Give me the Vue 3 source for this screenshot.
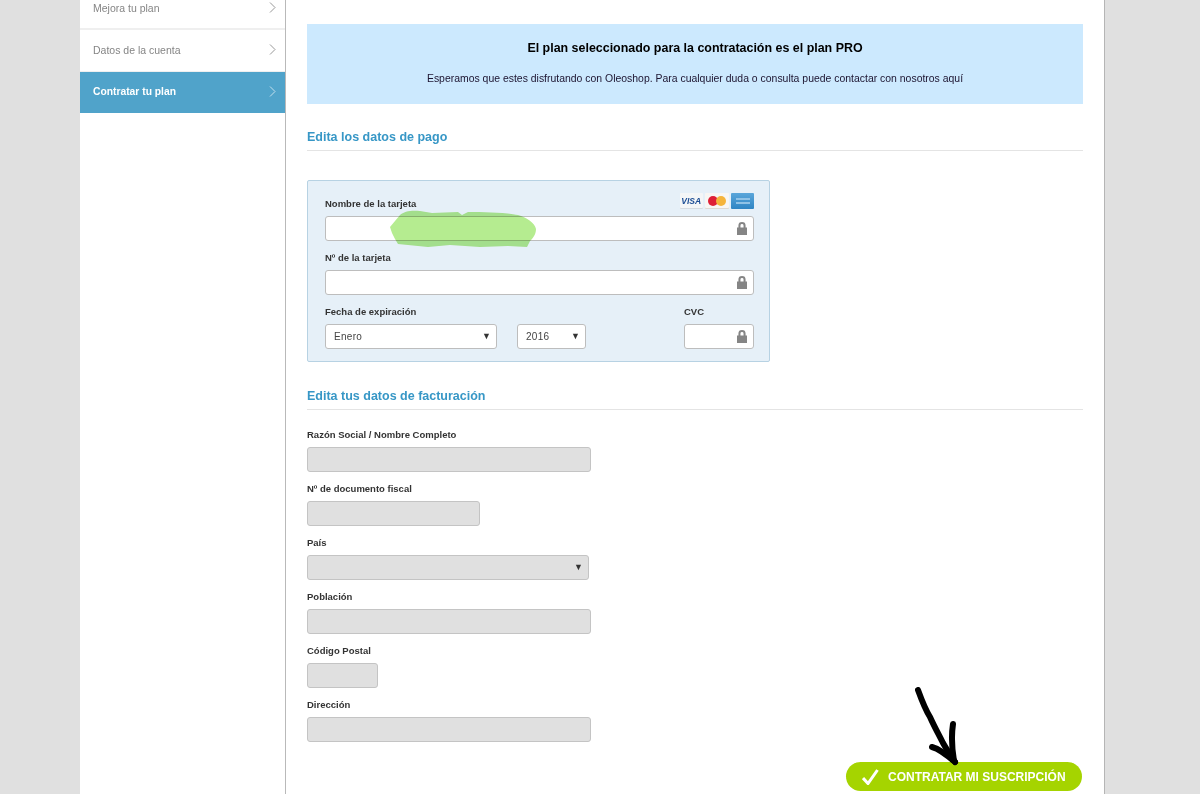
<script setup>
const menu = [
  { text: 'Mejora tu plan', cls: 'cut' },
  { text: 'Datos de la cuenta', cls: '' },
  { text: 'Contratar tu plan', cls: 'active' },
]
const billing = [
  { label: 'Razón Social / Nombre Completo', cls: 'w-full' },
  { label: 'Nº de documento fiscal', cls: 'w-doc' },
  { label: 'País', cls: 'w-country', select: true },
  { label: 'Población', cls: 'w-full' },
  { label: 'Código Postal', cls: 'w-zip' },
  { label: 'Dirección', cls: 'w-full' },
]
const lock = 'M3 6V4.200a3 3 0 0 1 6 0V6h1.200v6.600H1.800V6zm1.700 0h2.600V4.200a1.300 1.300 0 0 0-2.600 0z'
</script>

<template>
  <div class="shell">
    <aside class="side">
      <a v-for="m in menu" :key="m.text" class="side-item" :class="m.cls">
        <span>{{ m.text }}</span>
        <svg class="chev" width="7" height="11" viewBox="0 0 7 11"><path d="M1 .5l5 5-5 5" fill="none" stroke="currentColor" stroke-width=".9" /></svg>
      </a>
    </aside>

    <main class="main">
      <section class="banner">
        <h1>El plan seleccionado para la contratación es el plan PRO</h1>
        <p>Esperamos que estes disfrutando con Oleoshop. Para cualquier duda o consulta puede contactar con nosotros aquí</p>
      </section>

      <h2 class="title">Edita los datos de pago</h2>

      <section class="card">
        <div class="label-row">
          <label class="lbl">Nombre de la tarjeta</label>
          <div class="logos">
            <span class="logo visa">VISA</span>
            <span class="logo mc"><i class="red"></i><i class="amber"></i></span>
            <span class="logo amex"><i></i><i></i></span>
          </div>
        </div>
        <div class="input"><svg class="lock" width="10" height="13" viewBox="1.800 1.200 8.400 11.400" preserveAspectRatio="none"><path :d="lock" fill="#858585" fill-rule="evenodd" /></svg></div>

        <label class="lbl gap">Nº de la tarjeta</label>
        <div class="input"><svg class="lock" width="10" height="13" viewBox="1.800 1.200 8.400 11.400" preserveAspectRatio="none"><path :d="lock" fill="#858585" fill-rule="evenodd" /></svg></div>

        <div class="date-row gap">
          <div class="month">
            <label class="lbl">Fecha de expiración</label>
            <div class="input sel">Enero<span class="caret">▼</span></div>
          </div>
          <div class="year">
            <div class="lbl">&nbsp;</div>
            <div class="input sel">2016<span class="caret">▼</span></div>
          </div>
          <div class="cvc">
            <label class="lbl">CVC</label>
            <div class="input"><svg class="lock" width="10" height="13" viewBox="1.800 1.200 8.400 11.400" preserveAspectRatio="none"><path :d="lock" fill="#858585" fill-rule="evenodd" /></svg></div>
          </div>
        </div>
      </section>

      <h2 class="title second">Edita tus datos de facturación</h2>

      <section class="billing">
        <div v-for="f in billing" :key="f.label" class="bfield">
          <label class="lbl">{{ f.label }}</label>
          <div class="input off" :class="f.cls"><span v-if="f.select" class="caret">▼</span></div>
        </div>
      </section>

      <div class="actions">
        <button class="cta" type="button">
          <svg width="17" height="17" viewBox="0 0 17 17"><path d="M1 10l5 5.500L15.500 2" fill="none" stroke="#fff" stroke-width="3" /></svg>
          CONTRATAR MI SUSCRIPCIÓN
        </button>
      </div>
    </main>

    <svg class="blob" width="150" height="40" viewBox="0 0 150 40">
      <path d="M10 6C14 2 22 1 30 2l12 2 26-1 4 3 6-3c17 0 42 1 50 3s17 8 18 14c0 6-4 10-6 12l-3 6-19-1-28 1-30-2-22 2-30-3-3-5-3-6-2-6z" fill="#b5ec90" />
    </svg>
    <svg class="arrow" width="60" height="90" viewBox="0 0 60 90">
      <path d="M3 3C7 14 10 22 15 30c4 9 9 18 13 26 4 7 8 13 12 19" fill="none" stroke="#000" stroke-width="6" stroke-linecap="round" />
      <path d="M38 37c-2 13-1 25 1 37M17 60c8 2 15 8 23 15" fill="none" stroke="#000" stroke-width="6" stroke-linecap="round" />
    </svg>
  </div>
</template>

<style>
html, body { margin: 0; height: 100%; overflow: hidden; background: #e0e0e0; }
</style>

<style scoped>
.shell {
  position: relative;
  display: flex;
  width: 1025px;
  height: 794px;
  margin-left: 80px;
  background: #fff;
  border-right: 1px solid #b5b5b5;
  box-sizing: border-box;
  font-family: "Liberation Sans", Arial, sans-serif;
}
.side { width: 206px; flex: none; border-right: 1px solid #b9b9b9; box-sizing: border-box; }
.side-item {
  display: flex;
  align-items: center;
  justify-content: space-between;
  height: 42px;
  padding: 0 9px 2px 13px;
  box-sizing: border-box;
  border-bottom: 1px solid #efefef;
  font-size: 10.500px;
  color: #858585;
}
.side-item.cut { height: 30px; padding-bottom: 13px; border-bottom-width: 2px; }
.side-item.active { height: 41px; background: #50a3ca; color: #fff; font-weight: 700; font-size: 10.300px; border-bottom: 0; }
.chev { color: #8c8c8c; }
.active .chev { color: #cfe6f1; }

.main { flex: 1; padding: 24px 21px 0; min-width: 0; }
.banner { height: 80px; background: #cce9fe; text-align: center; box-sizing: border-box; padding-top: 17px; color: #000; }
.banner h1 { margin: 0; font-size: 12.450px; line-height: 14px; font-weight: 700; }
.banner p { margin: 17px 0 0; font-size: 10.450px; line-height: 13px; color: #1c1430; }

.title {
  margin: 24px 0 0;
  height: 22px;
  font-size: 12.500px;
  line-height: 18px;
  font-weight: 700;
  color: #3797c6;
  border-bottom: 1px solid #e4e4e4;
}
.title.second { margin-top: 25px; }

.card {
  width: 463px;
  height: 182px;
  margin-top: 29px;
  padding: 14px 15px 0 17px;
  box-sizing: border-box;
  background: #e6f0f8;
  border: 1px solid #b7d2e3;
  border-radius: 2px;
}
.label-row { display: flex; justify-content: space-between; height: 21px; }
.lbl { display: block; height: 14px; font-size: 9.500px; line-height: 17px; font-weight: 700; color: #333; margin-bottom: 7px; }
.gap { margin-top: 8px; }
.label-row .lbl { margin-bottom: 0; }

.logos { display: flex; gap: 2px; margin-top: -2px; height: 16px; }
.logo { display: block; width: 23.500px; height: 16px; box-sizing: border-box; border-radius: 1px; position: relative; overflow: hidden; }
.visa { background: #f4f6f7; color: #1c4d94; font-size: 8.500px; font-weight: 700; font-style: italic; line-height: 16px; text-align: center; box-shadow: inset 0 -1px 0 #d5dbe0; }
.mc { background: #f8f6f3; box-shadow: inset 0 -1px 0 #ddd9d2; }
.mc i { position: absolute; top: 3px; width: 10px; height: 10px; border-radius: 50%; }
.mc .red { left: 3px; background: #de1f36; }
.mc .amber { left: 11px; background: #f5b43a; }
.amex { background: linear-gradient(#5aa6da, #2f85c4); }
.amex i { position: absolute; left: 5px; width: 14px; height: 2px; background: #8fc2e6; }
.amex i:first-child { top: 5px; }
.amex i:last-child { top: 9px; }

.input {
  position: relative;
  height: 25px;
  box-sizing: border-box;
  background: #fff;
  border: 1px solid #bdbdbd;
  border-radius: 3px;
}
.lock { position: absolute; right: 6px; top: 5px; }
.sel { padding-left: 8px; font-size: 10px; line-height: 23px; letter-spacing: .3px; color: #444; }
.caret { position: absolute; right: 5px; top: 0; font-size: 9px; line-height: 23px; color: #333; letter-spacing: 0; }

.date-row { display: flex; }
.month { width: 172px; }
.year { width: 69px; margin-left: 20px; }
.cvc { width: 70px; margin-left: 98px; }

.billing { margin-top: 16px; }
.bfield { height: 54px; }
.off { background: #e0e0e0; border-color: #c4c4c4; }
.w-full { width: 284px; }
.w-doc { width: 173px; }
.w-country { width: 282px; }
.w-zip { width: 71px; }

.actions { display: flex; justify-content: flex-end; margin-top: 12px; padding-right: 1px; }
.cta {
  display: flex;
  align-items: center;
  gap: 9px;
  width: 236px;
  height: 29px;
  padding: 0 0 0 16px;
  box-sizing: border-box;
  border: 0;
  border-radius: 15px;
  background: #a5d400;
  color: #fff;
  font: 700 12px "Liberation Sans", Arial, sans-serif;
  white-space: nowrap;
}

.blob { position: absolute; left: 310px; top: 209px; mix-blend-mode: multiply; filter: blur(.5px); }
.arrow { position: absolute; left: 835px; top: 687px; }
</style>
